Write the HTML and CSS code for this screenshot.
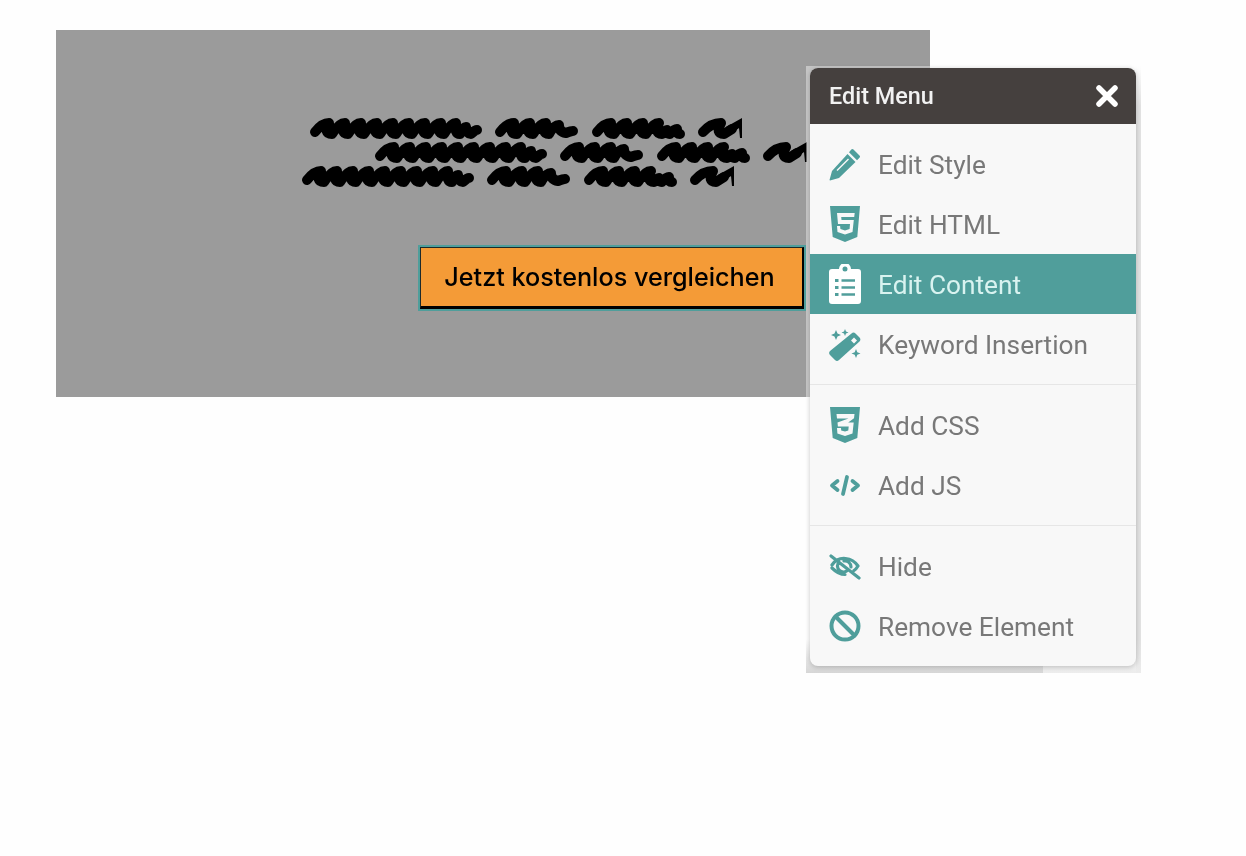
FILE: index.html
```html
<!DOCTYPE html>
<html lang="de">
<head>
<meta charset="utf-8">
<title>Edit Menu</title>
<link rel="stylesheet" href="styles.css">
</head>
<body>
<svg class="defs" width="0" height="0" aria-hidden="true">
  <defs>
    <g id="scribble">
      <path class="sc" d="M5 15q7 -9 14 -9q-6 11 3 11q7 -11 13 -11q-5 11 3 11q7 -11 13 -11q-5 11 3 11q7 -11 13 -11q-5 11 3 11q7 -11 13 -11q-5 11 3 11q7 -11 13 -11q-5 11 3 11q7 -11 13 -11q-5 11 3 11q7 -11 13 -11q-5 11 3 11q7 -11 12 -11q-2 11 4 11q3 -7 6 -7q1 7 5 7q4 -4 6 -4"/>
      <path class="sc" d="M190 15q7 -9 14 -9q-6 11 3 11q7 -11 13 -11q-5 11 3 11q7 -11 13 -11q-5 11 3 11q5 -9 10 -9q0 7 7 8q5 -2 7 -2"/>
      <path class="sc" d="M287 15q7 -9 14 -9q-6 11 3 11q7 -11 13 -11q-5 11 3 11q7 -11 13 -11q-5 11 3 11q7 -11 13 -11q-5 11 3 11q3 -4 5 -4q0 4 3 4q4 -5 7 -5q0 5 3 5"/>
      <path class="sc" d="M393 15q8 -9 18 -9q-6 11 3 11l8 -5"/>
      <path class="tail" d="M416 10l16 -9v20l-2 0l-1 -10l-9 7z"/>
    </g>
  </defs>
</svg>

<main class="banner">
  <svg class="scribbles" width="507" height="75" viewBox="0 0 507 75" role="img" aria-label="Geschwärzter Text">
    <use href="#scribble" x="10" y="2"/>
    <use href="#scribble" x="75" y="26"/>
    <use href="#scribble" x="2" y="50"/>
  </svg>
  <button class="cta" type="button">Jetzt kostenlos vergleichen</button>
</main>

<aside class="menu-shot">
  <div class="menu">
    <header class="menu-head">
      <span>Edit Menu</span>
      <svg class="close" width="22" height="22" viewBox="0 0 22 22"><path d="M3 3L19 19M19 3L3 19"/></svg>
    </header>
    <ul class="menu-group">
      <li class="item">
        <svg class="ico" viewBox="0 0 32 36"><path fill-rule="evenodd" d="M24.500 3.500l6 6a1.500 1.500 0 0 1 0 2.200L28 14.200 20 6.200l2.300-2.700a1.500 1.500 0 0 1 2.200 0zM18.500 8l8 8L10 32l-9 2.500-.5-.5L3 25zM19 12.500L7.500 24l1 1L20 13.500z"/></svg>
        <span>Edit Style</span>
      </li>
      <li class="item">
        <svg class="ico" viewBox="0 0 32 36"><path fill-rule="evenodd" d="M1 0h30l-2.700 31L16 36 3.700 31zM8 7l1 11h12l-.4 5-4.600 1.400-4.600-1.400-.3-3H8l.5 6L16 28.500l7.500-2.500 1.300-12H12.500l-.3-3h13l.5-4z"/></svg>
        <span>Edit HTML</span>
      </li>
      <li class="item active">
        <svg class="ico" viewBox="0 0 32 40"><path fill-rule="evenodd" d="M3 5h7a6 6 0 0 1 12 0h7a3 3 0 0 1 3 3v29a3 3 0 0 1-3 3H3a3 3 0 0 1-3-3V8a3 3 0 0 1 3-3zm13-2.500a2.500 2.500 0 1 0 0 5 2.500 2.500 0 0 0 0-5zM6 15v3h3.500v-3zm6.500 .2v2.600h13.500v-2.600zM6 22v3h3.500v-3zm6.500 .2v2.600h13.500v-2.600zM6 29v3h3.500v-3zm6.500 .2v2.600h13.500v-2.600z"/></svg>
        <span>Edit Content</span>
      </li>
      <li class="item">
        <svg class="ico" viewBox="0 0 32 36"><path fill-rule="evenodd" d="M22.500 7.500a3 3 0 0 1 4 0l4 4a3 3 0 0 1 0 4L10 34a3 3 0 0 1-4 0l-5-5a3 3 0 0 1 0-4zm2.500 4l-3 3 3 3 3-3z"/><path d="M7 4l1.500 3.500L12 9 8.500 10.500 7 14l-1.500-3.500L2 9l3.500-1.500zM16 3l1 2.500L19.500 6.500 17 7.500 16 10l-1-2.500-2.500-1 2.500-1zM27 23l1.300 3.200 3.200 1.300-3.200 1.300L27 32l-1.300-3.200-3.200-1.300 3.200-1.300z"/></svg>
        <span>Keyword Insertion</span>
      </li>
    </ul>
    <hr class="sep">
    <ul class="menu-group">
      <li class="item">
        <svg class="ico" viewBox="0 0 32 36"><path fill-rule="evenodd" d="M1 0h30l-2.700 31L16 36 3.700 31zM7.500 7l.5 4.500h11.500L8.500 15.500l.4 4h10.800l-.4 4L16 24.500l-3.800-1-.2-2.500H8l.4 5.500L16 29l7.500-2.500 1.200-11-5.500 0 5.800-4.200.5-4.300z"/></svg>
        <span>Add CSS</span>
      </li>
      <li class="item">
        <svg class="ico ico-line code" viewBox="0 0 32 36"><path d="M8.500 14L3 18.500 8.500 23M23.500 14L29 18.500 23.500 23M18 10L14 27"/></svg>
        <span>Add JS</span>
      </li>
    </ul>
    <hr class="sep">
    <ul class="menu-group">
      <li class="item">
        <svg class="ico ico-line thin" viewBox="0 0 32 36"><path d="M3 17c3-4.500 8-7 13.500-6.500 5 .5 9.500 3 12.500 7.500-1.500 2.500-2.500 3.500-4 4.500M3 20c3 3 8 6.500 13 6.500M2 8l28 22M10 14a6 6 0 0 0 9 8M15 13a6 6 0 0 1 7 6"/></svg>
        <span>Hide</span>
      </li>
      <li class="item">
        <svg class="ico ico-line ban" viewBox="0 0 32 36"><circle cx="16" cy="18" r="13.500"/><path d="M6.500 8.500L25.500 27.500"/></svg>
        <span>Remove Element</span>
      </li>
    </ul>
  </div>
</aside>
</body>
</html>
```

FILE: styles.css
```css
html, body {
  margin: 0;
  padding: 0;
  background: #fefefe;
}

body {
  position: relative;
  width: 1246px;
  height: 856px;
  overflow: hidden;
}

.defs {
  display: block;
  height: 0;
}

.banner {
  box-sizing: border-box;
  width: 874px;
  height: 367px;
  margin: 30px 0 0 56px;
  padding-top: 85px;
  background: #9b9b9b;
}

.scribbles {
  display: block;
  margin-left: 244px;
  overflow: hidden;
}

.sc {
  fill: none;
  stroke: #000;
  stroke-width: 10;
  stroke-linecap: round;
  stroke-linejoin: round;
}

.tail {
  fill: #000;
}

.cta {
  display: block;
  box-sizing: border-box;
  width: 384px;
  height: 62px;
  margin: 57px 0 0 364px;
  padding: 0 4px 0 0;
  background: #f49b37;
  border: 1px solid #1d2a2a;
  border-right: 2px solid #000;
  border-bottom: 3px solid #000;
  outline: 2px solid #4f9e9b;
  font-family: "Inter", "Liberation Sans", sans-serif;
  font-size: 25.2px;
  font-weight: 500;
  color: #000;
  filter: blur(0.35px);
}

.menu-shot {
  position: absolute;
  left: 806px;
  top: 66px;
  box-sizing: border-box;
  width: 335px;
  height: 607px;
  padding: 2px 5px 0 4px;
  background:
    linear-gradient(180deg, rgba(222, 222, 222, 0), #d6d6d6) left bottom / 237px 34px no-repeat,
    linear-gradient(180deg, rgba(236, 236, 236, 0), #ececec) right bottom / 98px 34px no-repeat,
    linear-gradient(180deg, rgba(230, 230, 230, 0), #e2e2e2 40px) right / 5px 100% no-repeat,
    rgba(255, 255, 255, 0.42);
}

.menu {
  box-sizing: border-box;
  width: 326px;
  height: 598px;
  background: #f8f8f8;
  border-radius: 8px;
  overflow: hidden;
  box-shadow: 0 1px 5px rgba(0, 0, 0, 0.22);
  font-family: "Roboto", "Liberation Sans", sans-serif;
  filter: blur(0.5px);
}

.menu-head {
  display: flex;
  align-items: center;
  justify-content: space-between;
  box-sizing: border-box;
  height: 56px;
  padding: 0 18px 0 19px;
  background: #45403e;
  color: #f2f2f2;
  font-size: 23.4px;
  font-weight: 500;
}

.close {
  fill: none;
  stroke: #fff;
  stroke-width: 5.5;
  stroke-linecap: round;
}

.menu-group {
  list-style: none;
  margin: 0;
  padding: 10px 0;
}

.item {
  display: flex;
  align-items: center;
  gap: 17px;
  height: 60px;
  padding-left: 19px;
  color: #787878;
  font-size: 26.25px;
  white-space: nowrap;
}

.item span {
  padding-top: 1px;
}

.item.active {
  background: #509e9b;
  color: #d9f3f0;
}

.ico {
  flex: none;
  width: 32px;
  height: 36px;
  fill: #4f9e9b;
}

.active .ico {
  height: 40px;
  fill: #fff;
}

.ico-line {
  fill: none;
  stroke: #4f9e9b;
  stroke-width: 3.4;
  stroke-linecap: round;
  stroke-linejoin: round;
}

.ico-line.code {
  stroke-width: 3.8;
}

.ico-line.thin {
  stroke-width: 3.2;
}

.ico-line.ban {
  stroke-width: 4;
}

.sep {
  height: 1px;
  margin: 0;
  border: 0;
  background: #e6e6e6;
}
```
